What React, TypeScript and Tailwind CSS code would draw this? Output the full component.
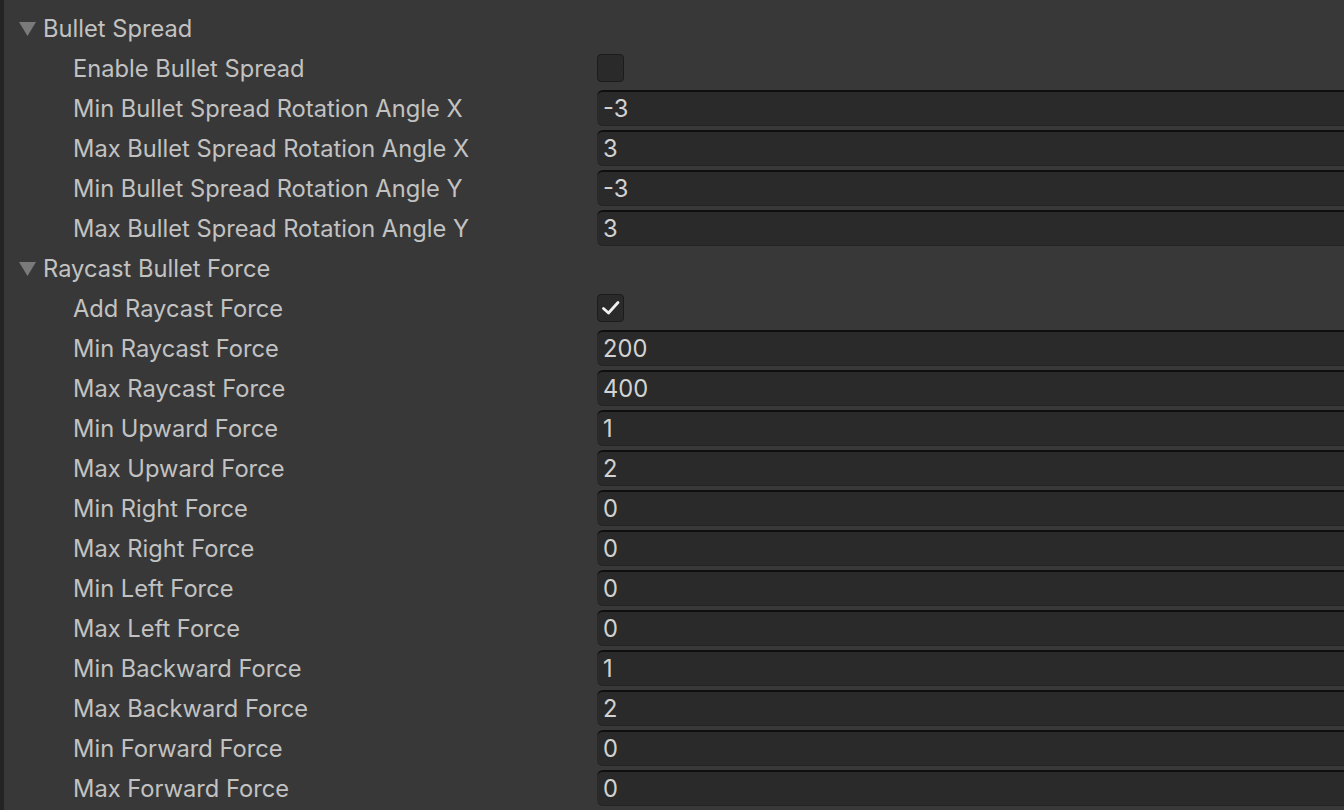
import React from "react";

type Row =
    | { kind: "header"; label: string }
    | { kind: "check"; label: string; checked: boolean }
    | { kind: "field"; label: string; value: string };

const ROWS: Row[] = [
    { kind: "header", label: "Bullet Spread" },
    { kind: "check", label: "Enable Bullet Spread", checked: false },
    { kind: "field", label: "Min Bullet Spread Rotation Angle X", value: "-3" },
    { kind: "field", label: "Max Bullet Spread Rotation Angle X", value: "3" },
    { kind: "field", label: "Min Bullet Spread Rotation Angle Y", value: "-3" },
    { kind: "field", label: "Max Bullet Spread Rotation Angle Y", value: "3" },
    { kind: "header", label: "Raycast Bullet Force" },
    { kind: "check", label: "Add Raycast Force", checked: true },
    { kind: "field", label: "Min Raycast Force", value: "200" },
    { kind: "field", label: "Max Raycast Force", value: "400" },
    { kind: "field", label: "Min Upward Force", value: "1" },
    { kind: "field", label: "Max Upward Force", value: "2" },
    { kind: "field", label: "Min Right Force", value: "0" },
    { kind: "field", label: "Max Right Force", value: "0" },
    { kind: "field", label: "Min Left Force", value: "0" },
    { kind: "field", label: "Max Left Force", value: "0" },
    { kind: "field", label: "Min Backward Force", value: "1" },
    { kind: "field", label: "Max Backward Force", value: "2" },
    { kind: "field", label: "Min Forward Force", value: "0" },
    { kind: "field", label: "Max Forward Force", value: "0" },
];

function Foldout({ label }: { label: string }) {
    return (
        <div className="h-10 flex items-center pl-[15px]">
            <svg width="17" height="15" viewBox="0 0 17 15" className="mr-[7px]">
                <polygon points="0,1 17,1 8.5,15" fill="#7a7a7a" />
            </svg>
            <span className="pt-[2px] text-[#c2c2c2]">{label}</span>
        </div>
    );
}

function Checkbox({ checked }: { checked: boolean }) {
    return (
        <div className="w-[27px] h-[28px] rounded-[4px] bg-[#2a2a2a] border border-[#1c1c1c] flex items-center justify-center">
            {checked && (
                <svg width="20" height="18" viewBox="0 0 20 18">
                    <polyline
                        points="2.5,9.5 7.5,14 17,3.5"
                        fill="none"
                        stroke="#f0f0f0"
                        strokeWidth="2.8"
                        strokeLinecap="round"
                        strokeLinejoin="round"
                    />
                </svg>
            )}
        </div>
    );
}

function NumberField({ value }: { value: string }) {
    return (
        <div className="flex-1 h-9 bg-[#2a2a2a] border-t-2 border-t-[#0f0f0f] border-b border-b-[#232323] rounded-l-[6px] flex items-center pl-[6px] pt-[1px] text-[#d2d2d2]">
            {value}
        </div>
    );
}

export default function App() {
    return (
        <div
            className="w-[1344px] h-[810px] overflow-hidden flex bg-[#383838] text-[23.7px] leading-none"
            style={{ fontFamily: "Inter, 'Noto Sans', sans-serif" }}
        >
            {/* left window edge */}
            <div className="w-1 bg-[#232323] shrink-0" />
            <div className="flex-1 flex flex-col pt-2">
                {ROWS.map((row, i) =>
                    row.kind === "header" ? (
                        <Foldout key={i} label={row.label} />
                    ) : (
                        <div key={i} className="h-10 flex items-center">
                            <div className="w-[593px] shrink-0 pl-[69px] pt-[2px] text-[#c2c2c2]">{row.label}</div>
                            {row.kind === "check" ? (
                                <Checkbox checked={row.checked} />
                            ) : (
                                <NumberField value={row.value} />
                            )}
                        </div>
                    )
                )}
            </div>
        </div>
    );
}
